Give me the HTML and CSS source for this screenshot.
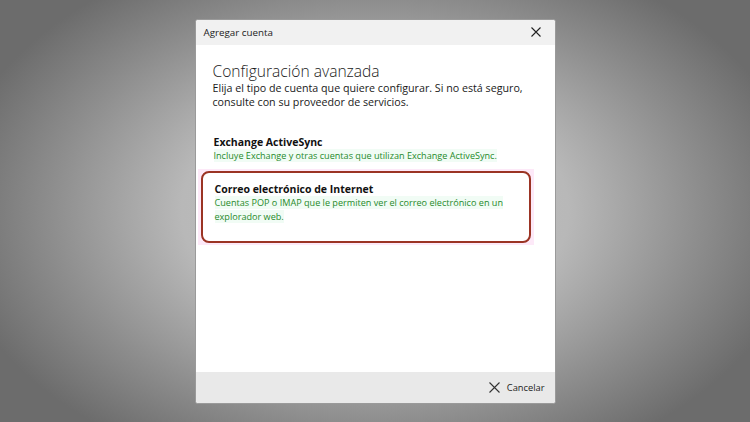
FILE: index.html
```html
<!DOCTYPE html>
<html lang="es">
<head>
<meta charset="utf-8">
<link rel="stylesheet" href="styles.css">
</head>
<body>
<div class="stage">
  <div class="dialog">
    <div class="titlebar">
      <span class="title">Agregar cuenta</span>
      <svg class="close" width="10" height="10" viewBox="0 0 10 10"><path d="M0.5 0.5 L9.5 9.5 M9.5 0.5 L0.5 9.5" stroke="#222" stroke-width="1.1" fill="none"/></svg>
    </div>
    <div class="content">
      <h1 class="heading">Configuración avanzada</h1>
      <p class="intro">Elija el tipo de cuenta que quiere configurar. Si no está seguro, consulte con su proveedor de servicios.</p>
      <div class="option option-first">
        <div class="opt-title">Exchange ActiveSync</div>
        <div class="opt-desc"><span class="hl">Incluye Exchange y otras cuentas que utilizan Exchange ActiveSync.</span></div>
      </div>
      <div class="selected-wrap">
        <div class="option option-selected">
          <div class="opt-title">Correo electrónico de Internet</div>
          <div class="opt-desc"><span class="hl">Cuentas POP o IMAP que le permiten ver el correo electrónico en un</span><br><span class="hl">explorador web.</span></div>
        </div>
      </div>
    </div>
    <div class="footer">
      <div class="cancel">
        <svg width="11" height="11" viewBox="0 0 11 11"><path d="M0.5 0.5 L10.5 10.5 M10.5 0.5 L0.5 10.5" stroke="#333" stroke-width="1.1" fill="none"/></svg>
        <span>Cancelar</span>
      </div>
    </div>
  </div>
</div>
</body>
</html>
```

FILE: styles.css
```css
html, body {
  margin: 0;
  padding: 0;
  width: 750px;
  height: 422px;
  overflow: hidden;
}
body {
  font-family: "Open Sans", "Noto Sans", sans-serif;
  color: #1b1b1b;
}
.stage {
  width: 750px;
  height: 422px;
  display: flex;
  align-items: center;
  justify-content: center;
  background: radial-gradient(ellipse 430px 280px at 50% 50%, #c2c2c2 0%, #b8b8b8 45%, #8e8e8e 75%, #6c6c6c 100%);
}
.dialog {
  width: 361px;
  height: 385px;
  background: #ffffff;
  border: 1px solid #9a9a9a;
  box-sizing: border-box;
  display: flex;
  flex-direction: column;
  border-radius: 3px;
  overflow: hidden;
}
.titlebar {
  height: 25px;
  flex: none;
  background: #f1f1f1;
  display: flex;
  align-items: center;
  justify-content: space-between;
  padding: 0 14px 0 8px;
}
.title {
  font-size: 9.8px;
  color: #222;
}
.close {
  display: block;
}
.content {
  flex: 1;
  padding: 16px 0 0 17px;
}
.heading {
  margin: 0;
  font-size: 15.6px;
  font-weight: 300;
  line-height: 20px;
  color: #1a1a1a;
}
.intro {
  margin: 0;
  font-size: 10.7px;
  line-height: 14.5px;
  width: 330px;
  color: #1a1a1a;
}
.option-first {
  margin-top: 25px;
  padding-left: 1px;
}
.opt-title {
  font-size: 10.5px;
  font-weight: 700;
  line-height: 14px;
  color: #111;
}
.opt-desc {
  font-size: 9.1px;
  line-height: 14px;
  color: #1f8a2a;
}
.hl {
  background: #f1fcf5;
}
.selected-wrap {
  margin: 6px 0 0 -15px;
  width: 336px;
  padding: 2px 3px 2px 3px;
  box-sizing: border-box;
  background: #fde9f8;
}
.option-selected {
  border: 2px solid #9b3424;
  border-radius: 8px;
  background: #ffffff;
  height: 72px;
  box-sizing: border-box;
  padding: 9px 0 0 12px;
}
.footer {
  height: 31px;
  flex: none;
  background: #e9e9e9;
  display: flex;
  align-items: center;
  justify-content: flex-end;
  padding-right: 10px;
}
.cancel {
  display: flex;
  align-items: center;
  gap: 7px;
  font-size: 9.3px;
  color: #222;
}
.cancel svg {
  display: block;
}
```
